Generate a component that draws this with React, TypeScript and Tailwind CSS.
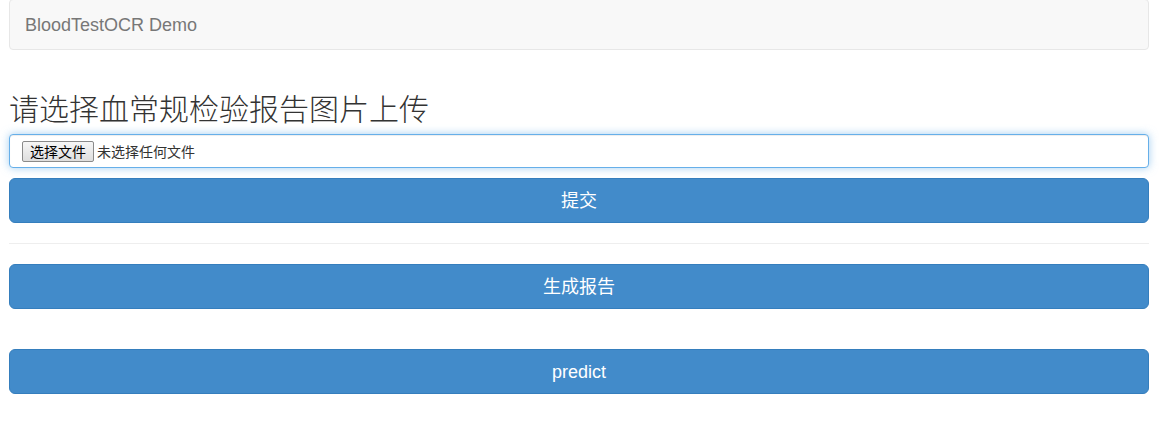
export default function App() {
  const btn =
    "w-full h-[45px] rounded-[6px] border border-[#357ebd] bg-[#428bca] text-white text-[18px] leading-[24px] font-['Liberation_Sans','Noto_Sans_CJK_SC',sans-serif]";
  return (
    <div className="w-[1161px] h-[421px] bg-white text-[14px] text-[#333] overflow-hidden font-['Liberation_Sans','Noto_Sans_CJK_SC',sans-serif]">
      <div className="pl-[9px] pr-[12px] flex flex-col">
        <nav className="-mt-px h-[51px] rounded-[4px] border border-[#e7e7e7] bg-[#f8f8f8] flex items-center px-[15px]">
          <span className="text-[18px] text-[#777] leading-[20px] pt-[1px]">BloodTestOCR Demo</span>
        </nav>
        <h2 className="mt-[41px] mb-[10px] text-[30px] leading-[33px] font-light text-[#333] font-['Noto_Sans_CJK_SC',serif]">
          请选择血常规检验报告图片上传
        </h2>
        <div className="h-[34px] rounded-[4px] border border-[#66afe9] bg-white px-[12px] flex items-center shadow-[inset_0_1px_1px_rgba(0,0,0,0.075),0_0_8px_rgba(102,175,233,0.6)] font-['Noto_Sans_CJK_SC',sans-serif]">
          <span className="h-[21px] w-[72px] flex items-center justify-center border border-[#8a8a8a] rounded-[2px] bg-gradient-to-b from-[#f6f6f6] to-[#dedede] text-[14px] text-black leading-none">
            选择文件
          </span>
          <span className="ml-[3px] text-[14px] text-[#333]">未选择任何文件</span>
        </div>
        <button className={"mt-[10px] " + btn}>提交</button>
        <hr className="mt-[20px] mb-[20px] border-0 border-t border-[#eee]" />
        <button className={btn}>生成报告</button>
        <button className={"mt-[40px] font-medium " + btn}>predict</button>
      </div>
    </div>
  );
}
